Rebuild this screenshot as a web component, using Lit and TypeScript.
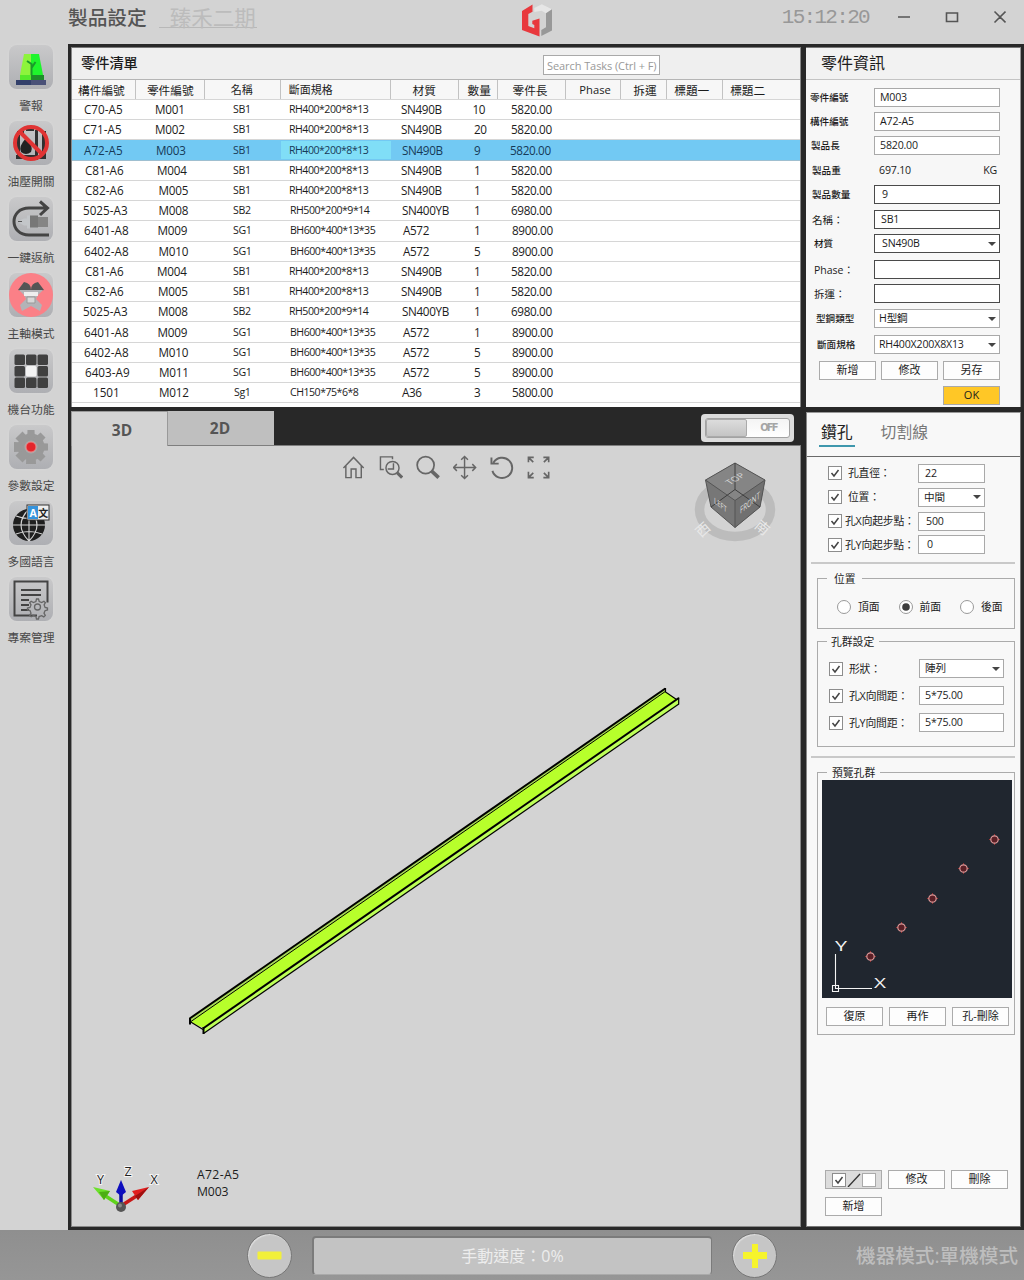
import { LitElement, html, css, svg, nothing } from "lit";
import { customElement, property } from "lit/decorators.js";
import { classMap } from "lit/directives/class-map.js";
import { styleMap } from "lit/directives/style-map.js";

const base = css`
  * {
    box-sizing: border-box;
  }
  :host {
    display: block;
    font-family: "Open Sans", "Noto Sans CJK TC", sans-serif;
    color: #1c1c1c;
  }
  svg {
    display: block;
  }
  .box {
    border: 1px solid #a9a9a9;
    background: #fff;
    font-size: 10.6px;
    line-height: 17px;
    height: 19px;
    white-space: pre;
    overflow: hidden;
    letter-spacing: -0.18px;
  }
  .caret {
    width: 0;
    height: 0;
    border: 4px solid transparent;
    border-top: 4px solid #444;
    border-bottom: 0;
    margin-right: 3px;
  }
  .select {
    display: flex;
    align-items: center;
    justify-content: space-between;
  }
  .btn {
    border: 1px solid #ababab;
    background: #fdfdfd;
    width: 57px;
    height: 19px;
    font-size: 11px;
    line-height: 16px;
    text-align: center;
    white-space: nowrap;
  }
`;

/* ---------- side menu ---------- */

const menu = [
  {
    label: "警報",
    icon: svg`<path d="M15 9h7v21H11z" fill="#8df43c"/><path d="M22 9h8l4 21H22z" fill="#1ff52c"/>
      <path d="M22.500 31V19l-4.500-3M22.500 23l4-6" stroke="#1a9a2a" stroke-width="2" fill="none"/>
      <path d="M11 30h24v5H11z" fill="#1e8e2a"/><path d="M11 30h11v5H11z" fill="#55e82b"/>
      <path d="M7 35h30v5H7z" fill="#33406b"/><path d="M22 35h15v5H22z" fill="#4a5178"/>`,
  },
  {
    label: "油壓開關",
    icon: svg`<path d="M8 10h7v3H8zM17 7h8v3h-8zM26 9h3v30h-3zM33 10h4v28h-4zM7 34h30v4H7zM8 14h3v20H8z" fill="#303030"/>
      <path d="M17 17q8 9 5 14-5 4-10 0-3-5 5-14z" fill="#222"/>
      <circle cx="22" cy="22" r="16" fill="none" stroke="#e03434" stroke-width="4"/>
      <path d="M11 11l22 22" stroke="#e03434" stroke-width="4"/>`,
  },
  {
    label: "一鍵返航",
    icon: svg`<path d="M40 38H20C0 38 0 11 20 11h17M31 4.500l7.500 6.500-7.500 7" fill="none" stroke="#444" stroke-width="3"/>
      <path d="M8 24.500l7-3h3v-3h3v13h-3v-3h-3z" fill="#c3c6c9"/><path d="M9 24.500h4" stroke="#555"/>
      <path d="M21 18.500h8v12h-8z" fill="#777"/><path d="M29 20h10v10H29z" fill="#858585"/>`,
  },
  {
    label: "主軸模式",
    icon: svg`<circle cx="22" cy="22" r="22" fill="#fb8087"/>
      <path d="M15 9q7 1 7 8 0-7 7-8l6 8-8 2H17l-8-2z" fill="#555"/>
      <path d="M10 17h24l-5 5-2 4 6 6-2 6-9-5-9 5-2-6 6-6-2-4z" fill="#b3b3b7"/>
      <path d="M15 19h14v4H15z" fill="#eee"/><path d="M18 24h8v6h-8z" fill="#d7d7d7" stroke="#999"/>`,
  },
  {
    label: "機台功能",
    icon: svg`${[5.5, 17, 28.5].map((y) =>
      [5.5, 17, 28.5].map(
        (x) =>
          svg`<rect x=${x} y=${y} width="10.500" height="10.500" rx="1.500" fill=${x === 17 && y === 17 ? "#f3f3f3" : "#404040"}/>`
      )
    )}`,
  },
  {
    label: "參數設定",
    icon: svg`<circle cx="22" cy="22" r="13.500" fill="#999"/>
      ${[0, 45, 90, 135].map((a) => svg`<path d="M18.500 5h7l1.500 34h-10z" fill="#999" transform="rotate(${a} 22 22)"/>`)}
      <circle cx="22" cy="22" r="6.500" fill="#aaa"/><circle cx="22" cy="22" r="5" fill="#e4262c" stroke="#f08080"/>`,
  },
  {
    label: "多國語言",
    icon: svg`<circle cx="20" cy="24" r="16" fill="#1f1f1f"/>
      <path d="M20 8v32M4 24h32M7 15q13 5 26 0M7 33q13-5 26 0M20 8q-16 16 0 32M20 8q16 16 0 32" fill="none" stroke="#d5d5d5" stroke-width="1.100"/>
      <rect x="18" y="4" width="22" height="15" fill="#eee" stroke="#333"/><path d="M19 5h10v13H19z" fill="#3593dc"/>
      <text x="20.500" y="15.500" font-size="10.500" font-weight="bold" fill="#fff">A</text>
      <text x="29.200" y="15.500" font-size="10" font-weight="bold" fill="#222">文</text>`,
  },
  {
    label: "專案管理",
    icon: svg`<path d="M28 38.500H5.500v-34h33v21" fill="none" stroke="#444" stroke-width="2"/>
      <path d="M12 13h20M12 18h20M12 23h8M12 28h8M12 33h8" stroke="#444" stroke-width="2"/>
      <g fill="none" stroke="#666" stroke-width="1.300"><circle cx="28.500" cy="30" r="3"/>
      <path d="M27.500 22h2l.700 2.500 2.500 1 2.200-1.300 1.500 1.500-1.300 2.200 1 2.500 2.400.600v2l-2.500.700-1 2.500 1.300 2.200-1.500 1.500-2.200-1.300-2.500 1-.600 2.400h-2l-.600-2.500-2.500-1-2.200 1.300-1.500-1.500 1.300-2.200-1-2.500-2.500-.600v-2l2.500-.600 1-2.500-1.300-2.200 1.500-1.500 2.200 1.300 2.500-1z"/></g>`,
  },
];

@customElement("side-menu")
class SideMenu extends LitElement {
  static styles = [
    base,
    css`
      :host {
        width: 68px;
        padding: 1px 0 0 0;
      }
      .item {
        height: 76px;
        width: 62px;
        display: flex;
        flex-direction: column;
        align-items: center;
      }
      .tile {
        width: 44px;
        height: 44px;
        border-radius: 8px;
        background: linear-gradient(#c9c9ca, #aeafb3);
        box-shadow: 0 0 2px #dcdcdc;
      }
      .label {
        margin-top: 8px;
        font-size: 11.8px;
        line-height: 17px;
        color: #484848;
        white-space: nowrap;
      }
    `,
  ];
  render() {
    return menu.map(
      (m) => html`<div class="item">
        <div class="tile"><svg width="44" height="44">${m.icon}</svg></div>
        <div class="label">${m.label}</div>
      </div>`
    );
  }
}

/* ---------- part list ---------- */

const columns = [
  { name: "構件編號", width: 65, head: 7 },
  { name: "零件編號", width: 69, head: 11 },
  { name: "名稱", width: 76, head: 26, size: 11 },
  { name: "斷面規格", width: 110, head: 8, size: 11 },
  { name: "材質", width: 69, head: 22 },
  { name: "數量", width: 39, head: 8 },
  { name: "零件長", width: 68, head: 14 },
  { name: "Phase", width: 55, head: 13, size: 11.2 },
  { name: "拆運", width: 46, head: 12 },
  { name: "標題一", width: 56, head: 7 },
  { name: "標題二", width: 77, head: 7 },
];

/* each value is followed by its inset from the column edge */
type Cell = [string, number];
const row = (...c: (string | number)[]): Cell[] => {
  const out: Cell[] = [];
  for (let i = 0; i < c.length; i += 2) out.push([c[i] as string, c[i + 1] as number]);
  return out;
};
const rows = [
  row("C70-A5", 12, "M001", 19, "SB1", 28, "RH400*200*8*13", 8, "SN490B", 10, "10", 12.5, "5820.00", 12),
  row("C71-A5", 11, "M002", 19, "SB1", 28, "RH400*200*8*13", 8, "SN490B", 10, "20", 14, "5820.00", 12),
  row("A72-A5", 12, "M003", 20, "SB1", 28, "RH400*200*8*13", 8, "SN490B", 11, "9", 14, "5820.00", 11),
  row("C81-A6", 13, "M004", 21, "SB1", 28, "RH400*200*8*13", 8, "SN490B", 10, "1", 14, "5820.00", 12),
  row("C82-A6", 13, "M005", 22.5, "SB1", 28, "RH400*200*8*13", 8, "SN490B", 10, "1", 14, "5820.00", 12),
  row("5025-A3", 11, "M008", 22.5, "SB2", 28, "RH500*200*9*14", 9, "SN400YB", 11, "1", 14, "6980.00", 12),
  row("6401-A8", 12, "M009", 21.5, "SG1", 28, "BH600*400*13*35", 9, "A572", 12, "1", 14, "8900.00", 13),
  row("6402-A8", 12, "M010", 22.5, "SG1", 28, "BH600*400*13*35", 9, "A572", 12, "5", 14, "8900.00", 13),
  row("C81-A6", 13, "M004", 21, "SB1", 28, "RH400*200*8*13", 8, "SN490B", 10, "1", 14, "5820.00", 12),
  row("C82-A6", 13, "M005", 22, "SB1", 28, "RH400*200*8*13", 8, "SN490B", 10, "1", 14, "5820.00", 12),
  row("5025-A3", 11, "M008", 22, "SB2", 28, "RH500*200*9*14", 8, "SN400YB", 11, "1", 14, "6980.00", 12),
  row("6401-A8", 12, "M009", 21.5, "SG1", 28, "BH600*400*13*35", 9, "A572", 12, "1", 14, "8900.00", 13),
  row("6402-A8", 12, "M010", 22.5, "SG1", 28, "BH600*400*13*35", 9, "A572", 12, "5", 14, "8900.00", 13),
  row("6403-A9", 13, "M011", 23, "SG1", 28, "BH600*400*13*35", 9, "A572", 12, "5", 14, "8900.00", 13),
  row("1501", 21, "M012", 23, "Sg1", 29, "CH150*75*6*8", 9, "A36", 11, "3", 14, "5800.00", 13),
];

@customElement("part-list")
class PartList extends LitElement {
  @property({ type: Number }) selected = 2;
  static styles = [
    base,
    css`
      :host {
        width: 730px;
        height: 360px;
        background: #fff;
        border-top: 1px solid #777;
        border-right: 1px solid #888;
        border-left: 1px solid #888;
      }
      .head {
        height: 32px;
        padding: 0 140px 0 9px;
        display: flex;
        align-items: center;
        justify-content: space-between;
        background: #efefef;
        border-bottom: 1px solid #b5b5b5;
      }
      .title {
        font-size: 14.2px;
        font-weight: 500;
        line-height: 18px;
        padding-bottom: 2px;
      }
      .search {
        width: 117px;
        height: 20px;
        margin-top: 2px;
        border: 1px solid #a9a9a9;
        background: #fff;
        color: #999;
        font-size: 11px;
        letter-spacing: -0.08px;
        line-height: 19px;
        padding-left: 3px;
        white-space: nowrap;
      }
      .row {
        display: flex;
        height: 20.23px;
        border-bottom: 1px solid #d6d6d6;
        align-items: center;
      }
      .row > :first-child {
        margin-left: -1px;
      }
      .row.names {
        height: 20px;
        background: #f7f7f7;
        align-items: stretch;
      }
      .name {
        border-right: 1px solid #c2c2c2;
        font-size: 11.7px;
        line-height: 20px;
        white-space: nowrap;
      }
      .name:last-child {
        border: 0;
      }
      .cell {
        font-size: 11.7px;
        line-height: 18px;
        white-space: nowrap;
        letter-spacing: -0.35px;
        position: relative;
        top: -0.5px;
      }
      .c0 {
        padding-right: 0;
        letter-spacing: 0;
      }
      .c1 {
        letter-spacing: -0.25px;
      }
      .c2 {
        font-size: 10.6px;
      }
      .c3 {
        font-size: 10.6px;
        letter-spacing: -0.5px;
      }
      .row.on {
        background: #72c9f3;
        border-color: #9fbfd0;
        color: #163a58;
      }
      .on .c3 {
        background: #80def7;
      }
    `,
  ];
  render() {
    return html`
      <div class="head"><span class="title">零件清單</span><span class="search">Search Tasks (Ctrl + F)</span></div>
      <div class="row names">
        ${columns.map(
          (c) =>
            html`<div class="name" style=${styleMap({ width: c.width + "px", paddingLeft: c.head + "px", fontSize: (c.size ?? 11.7) + "px" })}>${c.name}</div>`
        )}
      </div>
      ${rows.map(
        (r, i) => html`<div class=${classMap({ row: true, on: i === this.selected })}>
          ${r.map(
            ([text, inset], j) =>
              html`<div class="cell c${j}" style=${styleMap({ width: columns[j].width + "px", paddingLeft: (j ? inset : inset + 1) + "px" })}>${text}</div>`
          )}
        </div>`
      )}
    `;
  }
}

/* ---------- part information ---------- */

interface Info {
  label: string;
  value: string;
  h: number;
  inset: number;
  pad?: number;
  kind?: "dark" | "plain";
  select?: boolean;
}
const info: Info[] = [
  { label: "零件編號", value: "M003", h: 24, inset: 4 },
  { label: "構件編號", value: "A72-A5", h: 24, inset: 4 },
  { label: "製品長", value: "5820.00", h: 25, inset: 5 },
  { label: "製品重", value: "697.10", h: 24, inset: 6, kind: "plain", pad: 4 },
  { label: "製品數量", value: "9", h: 25, inset: 6, kind: "dark", pad: 7 },
  { label: "名稱：", value: "SB1", h: 24, inset: 6, kind: "dark", pad: 6 },
  { label: "材質", value: "SN490B", h: 26, inset: 8, kind: "dark", pad: 7, select: true },
  { label: "Phase：", value: "", h: 24, inset: 8, kind: "dark" },
  { label: "拆運：", value: "", h: 25, inset: 8, kind: "dark" },
  { label: "型鋼類型", value: "H型鋼", h: 26, inset: 10, select: true, pad: 4 },
  { label: "斷面規格", value: "RH400X200X8X13", h: 26, inset: 11, select: true, pad: 4 },
];

@customElement("part-info")
class PartInfo extends LitElement {
  static styles = [
    base,
    css`
      :host {
        width: 215px;
        height: 360px;
        background: #f7f7f7;
        border-top: 1px solid #777;
        border-right: 1px solid #999;
      }
      .head {
        height: 32px;
        padding-left: 15px;
        font-size: 16px;
        line-height: 31px;
        border-bottom: 1px solid #c4c4c4;
        background: #f2f2f2;
        margin-bottom: 8px;
      }
      .line {
        display: flex;
      }
      .label {
        width: 68px;
        font-weight: 500;
        line-height: 20px;
        white-space: nowrap;
      }
      .label.light {
        font-weight: 400;
      }
      .box {
        width: 126px;
      }
      .dark {
        border-color: #4a4a4a;
      }
      .plain {
        border-color: transparent;
        background: none;
        display: flex;
        justify-content: space-between;
        padding-right: 2px;
      }
      .buttons {
        display: grid;
        grid-template-columns: repeat(3, 57px);
        gap: 6px 5px;
        padding-left: 13px;
      }
      .ok {
        grid-column: 3;
        background: #ffc726;
        border-color: #a9a9a9;
      }
    `,
  ];
  render() {
    return html`
      <div class="head">零件資訊</div>
      ${info.map((f) => {
        const light = f.label.includes("：");
        return html`<div class="line" style=${styleMap({ height: f.h + "px" })}>
          <div class=${classMap({ label: true, light })} style=${styleMap({ paddingLeft: f.inset + "px", fontSize: light ? "10.5px" : "9.6px" })}>${f.label}</div>
          <div
            class=${classMap({ box: true, dark: f.kind === "dark", plain: f.kind === "plain", select: !!f.select })}
            style=${styleMap({ paddingLeft: (f.pad ?? 5) + "px" })}
          ><span>${f.value}</span>${f.kind === "plain" ? html`<span>KG</span>` : nothing}${f.select ? html`<i class="caret"></i>` : nothing}</div>
        </div>`;
      })}
      <div class="buttons">
        <div class="btn">新增</div><div class="btn">修改</div><div class="btn">另存</div>
        <div class="btn ok">OK</div>
      </div>
    `;
  }
}

/* ---------- 3D viewport ---------- */

const tools = [
  svg`<path d="M1.500 13L12 2l10.500 11M4 11v12h5.500v-9h5v9H20V11" />`,
  svg`<path d="M5 14.500H1.500V1.500H14V4M9 14h6V8"/><circle cx="14" cy="13" r="6.800"/><path d="M19 18l5 5" stroke-width="3.200"/>`,
  svg`<circle cx="10" cy="10" r="8.800" stroke-width="1.800"/><path d="M16 16l7.500 7" stroke-width="3.800"/>`,
  svg`<path d="M12 1v23M.500 12.500h23M8.500 4.500L12 1l3.500 3.500M8.500 20.500L12 24l3.500-3.500M4 9L.500 12.500 4 16M20 9l3.500 3.500L20 16"/>`,
  svg`<path d="M3.500 7.500A10.500 10.500 0 1 1 2.500 16M1.500 2v6.500H9" stroke-width="2"/>`,
  svg`<path d="M1.500 7V2H7M1.500 2l5 5M17 2h5.500v5M22.500 2l-5 5M1.500 17v6H7M1.500 23l5-5M17 23h5.500v-6M22.500 23l-5-5" stroke-width="1.700"/>`,
];

@customElement("model-view")
class ModelView extends LitElement {
  static styles = [
    base,
    css`
      :host {
        width: 730px;
        height: 816px;
        background: #d3d3d3;
      }
      .tabs {
        height: 35px;
        background: #282828;
        border-bottom: 1px solid #7e7e7e;
        display: flex;
        justify-content: flex-start;
        font-size: 15.5px;
        font-weight: 700;
        color: #555;
        text-align: center;
      }
      .tab {
        width: 97px;
        height: 35px;
        background: #d3d3d3;
        border: 1px solid #999;
        border-bottom: 0;
        padding-left: 5px;
        line-height: 37px;
      }
      .tab.off {
        width: 106px;
        height: 34px;
        background: #bfbfbf;
        border: 0;
        padding: 0 2px 0 0;
        line-height: 34px;
      }
      .switch {
        margin: 3px 7px 0 auto;
        width: 93px;
        height: 28px;
        border-radius: 4px;
        background: #dcdcdc;
        padding: 4px;
      }
      .track {
        height: 20px;
        border: 1px solid #a3a3a3;
        border-radius: 3px;
        background: linear-gradient(#f4f4f4, #fff);
        display: flex;
      }
      .knob {
        width: 41px;
        background: linear-gradient(#dcdcdc, #c4c4c4);
        border: 1px solid #aaa;
        border-radius: 2px;
      }
      .off-text {
        flex: 1;
        font: bold 11px/18px "Liberation Sans Narrow", "DejaVu Sans Condensed", sans-serif;
        letter-spacing: -1.8px;
        padding-left: 1px;
        color: #a5a5a5;
        text-align: center;
      }
      .canvas {
        position: relative;
        height: 781px;
        border-right: 1px solid #888;
        border-left: 1px solid #888;
        border-bottom: 1px solid #888;
      }
      .scene {
        position: absolute;
        left: -1px;
        top: 0;
      }
      .tools {
        position: absolute;
        left: 270px;
        top: 9px;
        display: flex;
        gap: 13px;
      }
      .tools svg {
        fill: none;
        stroke: #666;
        stroke-width: 1.5;
      }
      .caption {
        position: absolute;
        left: 125px;
        top: 720px;
        font-size: 12.2px;
        line-height: 17px;
        letter-spacing: 0.35px;
      }
      .caption div:last-child {
        letter-spacing: -0.1px;
      }
    `,
  ];
  render() {
    return html`
      <div class="tabs">
        <div class="tab">3D</div>
        <div class="tab off">2D</div>
        <div class="switch"><div class="track"><div class="knob"></div><div class="off-text">OFF</div></div></div>
      </div>
      <div class="canvas">
        <svg class="scene" width="730" height="780" viewBox="71 446 730 780">
          <path d="M189.500 1018L665.300 688v4l11 7 2.500-1.500v6.500L203.500 1033v-5L190 1022z" fill="#b7ff2b" />
          <path d="M203.500 1028L678.800 698v6L203.500 1033z" fill="#bdff58" />
          <path d="M189.500 1018L665.300 688v3L191 1021.500z" fill="#a9dc58" />
          <g fill="none" stroke="#000">
            <path d="M189.700 1018.500L665.300 688.500" stroke-width="2" />
            <path d="M191 1021.500L665.300 691.500" stroke-width="1" />
            <path d="M203 1028.500L678.800 698" stroke-width="2" />
            <path d="M203.500 1033.500L678.800 704" stroke-width="1.200" />
            <path d="M190 1018v6.500M203.500 1027v7" stroke-width="2" />
            <path d="M190 1021.500L203 1029.500M665.500 688v4l11 7.500M678.700 697.500v7" stroke-width="1.200" />
          </g>
          <ellipse cx="735" cy="509.500" rx="35.500" ry="27" fill="none" stroke="#bcbcbc" stroke-width="9.500" />
          <text transform="translate(698 530) rotate(-42)" x="-3" y="8" font-size="14" fill="#e9e9e9">西</text>
          <text transform="translate(761 520) rotate(40)" x="-1" y="10" font-size="14" fill="#e9e9e9">南</text>
          <path d="M735 463l30 17-5 27-25 20.500L711 507l-5.500-27z" fill="#777" />
          <path d="M735 463l30 17-30 20.500L705.500 480z" fill="#858585" />
          <path d="M735 500.500l30-20.500-5 27-25 20.500z" fill="#707070" />
          <g fill="none" stroke="#3e3e3e" stroke-width="1">
            <path d="M735 463l30 17-5 27-25 20.500L711 507l-5.500-27zM705.500 480L735 500.500 765 480M735 500.500v27" stroke="#555" />
            <path d="M735 463v26.500L711 507M735 489.500L760 507" />
          </g>
          <text transform="matrix(.75 -.42 .7 .45 730 485)" font-size="11" fill="#d5d5d5">TOP</text>
          <text transform="matrix(.75 .56 0 1 714 503)" font-size="8" fill="#ddd">LEFT</text>
          <text transform="matrix(.65 -.52 0 1 740 514)" font-size="9.500" fill="#ddd">FRONT</text>
          <g stroke-width="3.500">
            <path d="M121 1206L104 1195" stroke="#5fd31a" /><path d="M121 1206L138 1195" stroke="#c81818" />
            <path d="M121 1205V1190" stroke="#0a0aa0" />
          </g>
          <path d="M93 1187l17 4-6 9z" fill="#6be02a" /><path d="M99 1192l11-1-6 9z" fill="#4cae14" />
          <path d="M149 1187l-17 4 6 9z" fill="#e01f1f" /><path d="M149 1187l-14 9 3 4z" fill="#a01010" />
          <path d="M121 1180l5 12-5 4-5-4z" fill="#0d0dbe" /><circle cx="121" cy="1207" r="5" fill="#555" /><circle cx="120" cy="1205.500" r="2" fill="#888" />
          <g font-size="12.500" fill="#222" stroke="#f5f5f5" stroke-width="2" paint-order="stroke" text-anchor="middle">
            <text x="100.500" y="1184">Y</text><text x="128" y="1176">Z</text><text x="154" y="1184">X</text>
          </g>
        </svg>
        <div class="tools">${tools.map((t) => html`<svg width="24.1" height="25" viewBox="0 0 25 25">${t}</svg>`)}</div>
        <div class="caption"><div>A72-A5</div><div>M003</div></div>
      </div>
    `;
  }
}

/* ---------- drilling panel ---------- */

const check = html`<svg class="check" width="14" height="14">
  <rect x=".5" y=".5" width="13" height="13" fill="#fff" stroke="#8d8d8d" />
  <path d="M3.500 7l2.500 3 4.500-6" fill="none" stroke="#444" stroke-width="1.500" />
</svg>`;

const holes = [
  [48, 176],
  [79, 147],
  [110, 118],
  [141, 88],
  [172, 59],
];

@customElement("drill-panel")
class DrillPanel extends LitElement {
  static styles = [
    base,
    css`
      :host {
        width: 215px;
        height: 815px;
        background: #f8f8f8;
        border-top: 1px solid #999;
        border-right: 1px solid #777;
        border-bottom: 1px solid #777;
        border-left: 1px solid #888;
        display: flex;
        flex-direction: column;
      }
      .tabs {
        display: flex;
        gap: 26px;
        height: 44px;
        padding-left: 12px;
        border-bottom: 1px solid #6a6a6a;
        font-size: 15.8px;
        line-height: 22px;
      }
      .tab {
        margin-top: 8px;
        height: 26px;
        color: #777;
      }
      .tab.on {
        color: #222;
        padding: 0 2px;
        border-bottom: 2px solid #3f97ad;
      }
      .form {
        padding: 4px 0 0 21px;
        height: 105px;
      }
      .line {
        display: flex;
        align-items: center;
        height: 24px;
      }
      .form .line:last-child {
        height: 23px;
      }
      .label {
        width: 76px;
        padding-left: 6px;
        font-size: 10.8px;
        line-height: 16px;
        white-space: nowrap;
        letter-spacing: -0.2px;
      }
      .label.tight {
        padding-left: 3px;
      }
      .box {
        width: 67px;
        padding-left: 5px;
      }
      .rule {
        height: 2px;
        background: #c9c9c9;
        margin: 0 5px 0 4px;
      }
      .rule.second {
        margin-top: 9px;
      }
      .group {
        border: 1px solid #ababab;
        margin: 0 5px 0 10px;
      }
      .legend {
        width: fit-content;
        height: 16px;
        margin: -8px 0 0 9px;
        padding: 0 5px 0 4px;
        background: #f8f8f8;
        font-size: 10.8px;
        line-height: 16px;
      }
      .g1 {
        height: 51px;
        margin-top: 14px;
      }
      .g1 .legend {
        padding: 0 6px 0 7px;
      }
      .g2 {
        height: 106px;
        margin-top: 12px;
      }
      .g3 {
        height: 263px;
        margin-top: 14px;
        padding: 0 2px 0 4px;
      }
      .g3 .legend {
        height: 15px;
        margin-left: 5px;
        padding-left: 5px;
      }
      .g2 .box {
        width: 85px;
      }
      .g2 .line {
        height: 27px;
        padding-left: 11px;
      }
      .g2 .legend {
        margin-bottom: 5px;
      }
      .radios {
        display: flex;
        gap: 18.5px;
        padding: 11px 0 0 19px;
        font-size: 10.8px;
        line-height: 17px;
      }
      .radio {
        display: flex;
        gap: 7px;
        align-items: center;
        width: 43px;
        white-space: nowrap;
      }
      .preview {
        background: #20262f;
      }
      .buttons {
        display: grid;
        grid-template-columns: repeat(3, 57px);
        gap: 8px 6px;
        padding: 9px 0 0 4px;
      }
      .footer {
        margin-top: auto;
        padding: 0 0 10px 18px;
      }
      .toggle {
        display: flex;
        align-items: center;
        justify-content: center;
        gap: 1px;
        background: #dcdcdc;
      }
    `,
  ];
  line(label: string, value: string, pad: number, select = false, tight = false) {
    return html`<div class="line">
      ${check}
      <div class=${classMap({ label: true, tight })}>${label}</div>
      <div class=${classMap({ box: true, select })} style=${styleMap({ paddingLeft: pad + "px" })}><span>${value}</span>${select ? html`<i class="caret"></i>` : nothing}</div>
    </div>`;
  }
  radio(label: string, on = false) {
    return html`<div class="radio">
      <svg width="14" height="14"><circle cx="7" cy="7" r="6.500" fill="#fff" stroke="#999" />${on ? svg`<circle cx="7" cy="7" r="3.800" fill="#3d3d3d"/>` : nothing}</svg>
      ${label}
    </div>`;
  }
  render() {
    return html`
      <div class="tabs"><div class="tab on">鑽孔</div><div class="tab">切割線</div></div>
      <div class="form">
        ${this.line("孔直徑：", "22", 6)} ${this.line("位置：", "中間", 5, true)}
        ${this.line("孔X向起步點：", "500", 7, false, true)} ${this.line("孔Y向起步點：", "0", 8, false, true)}
      </div>
      <div class="rule"></div>
      <div class="group g1">
        <div class="legend">位置</div>
        <div class="radios">${this.radio("頂面")}${this.radio("前面", true)}${this.radio("後面")}</div>
      </div>
      <div class="group g2">
        <div class="legend">孔群設定</div>
        ${this.line("形狀：", "陣列", 5, true)} ${this.line("孔X向間距：", "5*75.00", 5)} ${this.line("孔Y向間距：", "5*75.00", 5)}
      </div>
      <div class="rule second"></div>
      <div class="group g3">
        <div class="legend">預覽孔群</div>
        <svg class="preview" width="190" height="218">
          ${holes.map(
            ([x, y]) => svg`<path d="M${x - 5} ${y + 0.5}h11M${x + 0.5} ${y - 5}v11" stroke="#933" /><circle cx=${x + 0.5} cy=${y + 0.5} r="3.700" fill="#5a1f26" stroke="#d99" stroke-width="1.200"/>`
          )}
          <path d="M13.500 174v34.500H50M10.500 205.500h6v6h-6z" fill="none" stroke="#f4f4f4" stroke-width="1.100" />
          <g fill="#f4f4f4" font-size="14">
            <text x="13" y="171" textLength="12" lengthAdjust="spacingAndGlyphs">Y</text>
            <text x="52" y="208" textLength="12" lengthAdjust="spacingAndGlyphs">X</text>
          </g>
        </svg>
        <div class="buttons"><div class="btn">復原</div><div class="btn">再作</div><div class="btn">孔-刪除</div></div>
      </div>
      <div class="buttons footer">
        <div class="btn toggle">
          ${check}
          <svg width="14" height="14"><path d="M1 14L13 1" stroke="#333" stroke-width="1.300" /></svg>
          <svg width="14" height="14"><rect x=".5" y=".5" width="13" height="13" fill="#fff" stroke="#aaa" /></svg>
        </div>
        <div class="btn">修改</div><div class="btn">刪除</div><div class="btn">新增</div>
      </div>
    `;
  }
}

/* ---------- shell ---------- */

@customElement("app-root")
class AppRoot extends LitElement {
  static styles = [
    base,
    css`
      :host {
        width: 1024px;
        height: 1280px;
        background: #d3d3d3;
        overflow: hidden;
      }
      .titlebar {
        height: 44px;
        display: flex;
        align-items: flex-start;
        padding-left: 68px;
      }
      .title {
        font-size: 19.7px;
        line-height: 35px;
        font-weight: 500;
        color: #555;
      }
      .project {
        margin: 6px 0 0 12px;
        padding-left: 11px;
        width: 98px;
        height: 22px;
        font-size: 21.5px;
        line-height: 23px;
        color: #bcbcbc;
        border-bottom: 1px solid #b8b8b8;
      }
      .logo {
        margin-left: 263px;
      }
      .clock {
        margin-left: 228px;
        font-family: "Liberation Mono", monospace;
        font-size: 21px;
        line-height: 35px;
        letter-spacing: -1.7px;
        color: #989898;
        width: 98px;
      }
      .body {
        display: flex;
        height: 1186px;
      }
      .frame {
        flex: 1;
        background: #282828;
        padding: 3px 3px 4px 3px;
        display: grid;
        grid-template-columns: 730px 215px;
        grid-template-rows: 360px 816px;
        gap: 4px 5px;
      }
      .frame drill-panel {
        margin-top: 1px;
      }
      .statusbar {
        height: 50px;
        background: linear-gradient(#8f8f8f, #969696);
        display: flex;
        align-items: center;
        padding: 0 6px 0 247px;
      }
      .round {
        width: 45px;
        height: 45px;
        border-radius: 50%;
        background: #c6c6c6;
        border: 1px solid #777;
        box-shadow: inset 1px 1px 1px #ddd;
      }
      .speed {
        width: 400px;
        height: 39px;
        margin: 0 20px 0 20px;
        border: 1px solid #7b7b7b;
        border-bottom-color: #aaa;
        border-width: 2px 1px 1px 2px;
        border-radius: 4px;
        background: #c3c3c3;
        color: #ededed;
        font-size: 16px;
        line-height: 36px;
        text-align: center;
      }
      .mode {
        margin-left: auto;
        font-size: 19.6px;
        font-weight: 500;
        color: #bebebe;
        white-space: nowrap;
        line-height: 51px;
      }
    `,
  ];
  render() {
    return html`
      <div class="titlebar">
        <div class="title">製品設定</div>
        <div class="project">臻禾二期</div>
        <svg class="logo" width="34" height="42" viewBox="520 0 34 42">
          <path d="M532.500 4.500L522 11v19l17.500 6.500v-18l-7.200 2.300v3.200l2 1v3.300l-6-2.300V14l4.200-2.300z" fill="#e8383d" />
          <path d="M534.300 12V8l7.500-3.700L552 9.300l-6 4-4.500-2.500z" fill="#e6e6e6" />
          <path d="M552 9.300v21.200L541.300 36v-6l4.700-2.700v-14z" fill="#989898" />
        </svg>
        <div class="clock">15:12:20</div>
        <svg width="126" height="34" viewBox="880 0 126 34" fill="none" stroke="#555" stroke-width="1.600">
          <path d="M898 17h12M946.500 13h11v8.500h-11zM994.500 11.500l11 11M1005.500 11.500l-11 11" />
        </svg>
      </div>
      <div class="body">
        <side-menu></side-menu>
        <div class="frame">
          <part-list></part-list>
          <part-info></part-info>
          <model-view></model-view>
          <drill-panel></drill-panel>
        </div>
      </div>
      <div class="statusbar">
        <svg class="round" viewBox="0 0 43 43"><rect x="9.500" y="17.500" width="24" height="8" rx="1" fill="#f2f03a" /></svg>
        <div class="speed">手動速度：0%</div>
        <svg class="round" viewBox="0 0 43 43"><path d="M19 10h6v8h9v7h-9v9h-6v-9h-9v-7h9z" fill="#f6f42c" /></svg>
        <div class="mode">機器模式:單機模式</div>
      </div>
    `;
  }
}
